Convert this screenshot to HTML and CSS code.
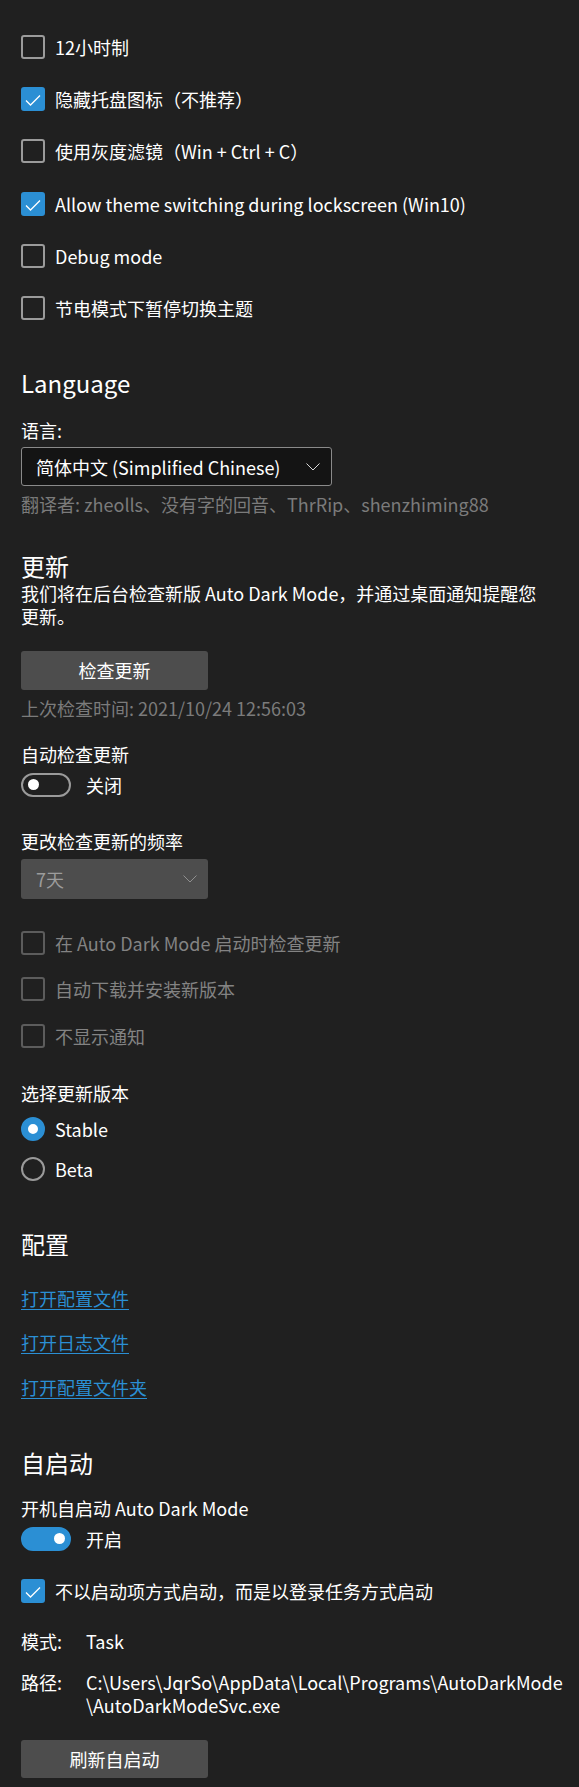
FILE: index.html
```html
<!DOCTYPE html>
<html lang="zh-CN">
<head>
<meta charset="utf-8">
<title>Auto Dark Mode 设置</title>
<link rel="stylesheet" href="styles.css">
</head>
<body>
<main class="page">
  <section class="checks top-checks">
    <div class="check"><span class="box"></span><span>12小时制</span></div>
    <div class="check"><span class="box on"><svg viewBox="0 0 24 24"><polyline points="5,13.5 9.5,18 19,8.5"/></svg></span><span>隐藏托盘图标（不推荐）</span></div>
    <div class="check"><span class="box"></span><span>使用灰度滤镜（Win + Ctrl + C）</span></div>
    <div class="check"><span class="box on"><svg viewBox="0 0 24 24"><polyline points="5,13.5 9.5,18 19,8.5"/></svg></span><span>Allow theme switching during lockscreen (Win10)</span></div>
    <div class="check"><span class="box"></span><span>Debug mode</span></div>
    <div class="check"><span class="box"></span><span>节电模式下暂停切换主题</span></div>
  </section>

  <h2 class="heading h-lang">Language</h2>
  <div class="label l-lang">语言:</div>
  <div class="select lang-select">
    <span>简体中文 (Simplified Chinese)</span>
    <svg class="chev" viewBox="0 0 14 8"><polyline points="0.5,0.5 7,7 13.5,0.5"/></svg>
  </div>
  <div class="muted translators">翻译者: zheolls、没有字的回音、ThrRip、shenzhiming88</div>

  <h2 class="heading h-update">更新</h2>
  <p class="desc">我们将在后台检查新版 Auto Dark Mode，并通过桌面通知提醒您<br>更新。</p>
  <div class="button b-check">检查更新</div>
  <div class="muted last-check">上次检查时间: 2021/10/24 12:56:03</div>

  <div class="label l-auto">自动检查更新</div>
  <div class="toggle-row t-auto"><span class="toggle"><span class="knob"></span></span><span>关闭</span></div>

  <div class="label l-freq">更改检查更新的频率</div>
  <div class="select freq-select">
    <span>7天</span>
    <svg class="chev" viewBox="0 0 14 8"><polyline points="0.5,0.5 7,7 13.5,0.5"/></svg>
  </div>

  <section class="checks disabled-checks">
    <div class="check disabled"><span class="box"></span><span>在 Auto Dark Mode 启动时检查更新</span></div>
    <div class="check disabled"><span class="box"></span><span>自动下载并安装新版本</span></div>
    <div class="check disabled"><span class="box"></span><span>不显示通知</span></div>
  </section>

  <div class="label l-channel">选择更新版本</div>
  <section class="radios">
    <div class="radio-row"><span class="radio on"></span><span>Stable</span></div>
    <div class="radio-row"><span class="radio"></span><span>Beta</span></div>
  </section>

  <h2 class="heading h-config">配置</h2>
  <section class="links">
    <a class="link">打开配置文件</a>
    <a class="link">打开日志文件</a>
    <a class="link">打开配置文件夹</a>
  </section>

  <h2 class="heading h-autostart">自启动</h2>
  <div class="label l-boot">开机自启动 Auto Dark Mode</div>
  <div class="toggle-row t-boot"><span class="toggle on"><span class="knob"></span></span><span>开启</span></div>

  <div class="check c-task"><span class="box on"><svg viewBox="0 0 24 24"><polyline points="5,13.5 9.5,18 19,8.5"/></svg></span><span>不以启动项方式启动，而是以登录任务方式启动</span></div>

  <div class="info i-mode"><span>模式:</span><span>Task</span></div>
  <div class="info i-path"><span>路径:</span><span>C:\Users\JqrSo\AppData\Local\Programs\AutoDarkMode<br>\AutoDarkModeSvc.exe</span></div>

  <div class="button b-refresh">刷新自启动</div>
</main>
</body>
</html>
```

FILE: styles.css
```css
html, body {
  margin: 0;
  padding: 0;
  background: #202020;
}
body {
  color: #ffffff;
  font-family: "Noto Sans CJK SC", "Noto Sans", sans-serif;
  font-size: 18px;
  line-height: 24px;
}
.page {
  padding: 35px 21px 6px 21px;
  display: flex;
  flex-direction: column;
  align-items: flex-start;
}

/* checkboxes */
.checks {
  display: flex;
  flex-direction: column;
}
.top-checks { gap: 28.2px; }
.check {
  display: flex;
  align-items: center;
  gap: 10px;
  height: 24px;
  white-space: nowrap;
}
.box {
  width: 24px;
  height: 24px;
  box-sizing: border-box;
  border: 2px solid #9b9b9b;
  border-radius: 3px;
  flex: none;
  display: flex;
}
.box.on {
  background: #2b8fd4;
  border-color: #2b8fd4;
}
.box svg {
  width: 24px;
  height: 24px;
  margin: -2px;
}
.box svg polyline {
  fill: none;
  stroke: #fff;
  stroke-width: 1.3;
}
.check.disabled { color: #838383; }
.check.disabled .box { border-color: #5c5c5c; }
.disabled-checks { margin-top: 32px; gap: 22.5px; }

/* headings & labels */
.heading {
  margin: 0;
  font-size: 24px;
  line-height: 32px;
  font-weight: 400;
}
.h-lang { margin-top: 47.5px; }
.h-update { margin-top: 33.5px; }
.h-config { margin-top: 47.5px; }
.h-autostart { margin-top: 48.5px; }
.label { line-height: 24px; }
.l-lang { margin-top: 19px; }
.l-auto { margin-top: 22px; }
.l-freq { margin-top: 32px; }
.l-channel { margin-top: 33px; }
.l-boot { margin-top: 16.5px; }

.muted { color: #7b7b7b; }
.translators { margin-top: 6px; }
.last-check { margin-top: 6px; }

.desc {
  margin: 0;
  line-height: 23px;
}

/* selects */
.select {
  box-sizing: border-box;
  display: flex;
  align-items: center;
  justify-content: space-between;
  border-radius: 3px;
}
.lang-select {
  margin-top: 5px;
  width: 311px;
  height: 39px;
  background: #141414;
  border: 1.5px solid #8a8a8a;
  padding: 0 11px 0 14px;
}
.freq-select {
  margin-top: 6px;
  width: 187px;
  height: 40px;
  background: #4d4d4d;
  color: #9c9c9c;
  padding: 0 11px 0 15px;
}
.chev {
  width: 14px;
  height: 8px;
}
.chev polyline {
  fill: none;
  stroke: #d8d8d8;
  stroke-width: 1;
}
.freq-select .chev polyline { stroke: #8f8f8f; }

/* buttons */
.button {
  width: 187px;
  height: 39px;
  background: #4d4d4d;
  border-radius: 3px;
  display: flex;
  align-items: center;
  justify-content: center;
}
.b-check { margin-top: 23px; }
.b-refresh { margin-top: 23px; height: 38px; }

/* toggles */
.toggle-row {
  display: flex;
  align-items: center;
  gap: 15px;
  margin-top: 7px;
}
.toggle {
  position: relative;
  width: 50px;
  height: 24px;
  box-sizing: border-box;
  border: 2px solid #9a9a9a;
  border-radius: 12px;
  flex: none;
}
.toggle .knob {
  position: absolute;
  width: 11px;
  height: 11px;
  border-radius: 50%;
  background: #fff;
  top: 4.5px;
  left: 4.5px;
}
.toggle.on {
  background: #2b8fd4;
  border-color: #2b8fd4;
}
.toggle.on .knob { left: auto; right: 4.5px; }

/* radios */
.radios {
  display: flex;
  flex-direction: column;
  gap: 16px;
  margin-top: 12px;
}
.radio-row {
  display: flex;
  align-items: center;
  gap: 10px;
  height: 24px;
}
.radio {
  width: 24px;
  height: 24px;
  box-sizing: border-box;
  border: 2px solid #9a9a9a;
  border-radius: 50%;
  flex: none;
}
.radio.on {
  border: 7.5px solid #2b8fd4;
  background: #fff;
}

/* links */
.links {
  display: flex;
  flex-direction: column;
  align-items: flex-start;
  gap: 20.5px;
  margin-top: 25.5px;
}
.link {
  color: #2b8fd4;
  text-decoration: underline;
  text-underline-offset: 3px;
  cursor: pointer;
}

/* autostart */
.c-task { margin-top: 28px; }
.info {
  display: grid;
  grid-template-columns: 65px auto;
}
.i-mode { margin-top: 26px; }
.i-path { margin-top: 18px; line-height: 23px; }
```
